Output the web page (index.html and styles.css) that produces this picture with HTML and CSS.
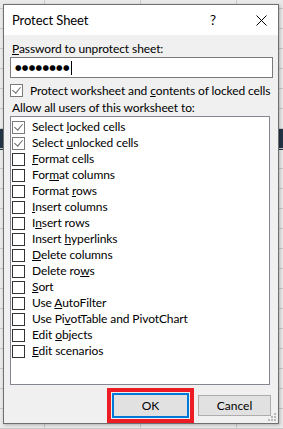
FILE: index.html
```html
<!DOCTYPE html>
<html>
<head>
<meta charset="utf-8">
<title>Protect Sheet</title>
<link rel="stylesheet" href="styles.css">
</head>
<body>
<div class="desk">
  <div class="band"></div>
  <div class="grid"></div>

  <div class="dialog">
    <div class="titlebar">
      <span class="title">Protect Sheet</span>
      <span class="help">?</span>
      <svg class="close" width="11" height="11" viewBox="0 0 11 11">
        <path d="M0.5 0.5 L10.5 10.5 M10.5 0.5 L0.5 10.5" stroke="#000" stroke-width="1" fill="none"/>
      </svg>
    </div>

    <div class="content">
      <div class="label"><u>P</u>assword to unprotect sheet:</div>
      <div class="pw"><span class="dots">&#9679;&#9679;&#9679;&#9679;&#9679;&#9679;&#9679;&#9679;</span><span class="caret"></span></div>

      <div class="check-row">
        <span class="box on"></span>
        <span>Protect worksheet and <u>c</u>ontents of locked cells</span>
      </div>

      <div class="label allow">Allow all users of this worksheet to:</div>
      <div class="list">
        <div class="item"><span class="box on"></span><span>Select <u>l</u>ocked cells</span></div>
        <div class="item"><span class="box on"></span><span>Select <u>u</u>nlocked cells</span></div>
        <div class="item"><span class="box"></span><span><u>F</u>ormat cells</span></div>
        <div class="item"><span class="box"></span><span>For<u>m</u>at columns</span></div>
        <div class="item"><span class="box"></span><span>Format <u>r</u>ows</span></div>
        <div class="item"><span class="box"></span><span><u>I</u>nsert columns</span></div>
        <div class="item"><span class="box"></span><span>I<u>n</u>sert rows</span></div>
        <div class="item"><span class="box"></span><span>Insert <u>h</u>yperlinks</span></div>
        <div class="item"><span class="box"></span><span><u>D</u>elete columns</span></div>
        <div class="item"><span class="box"></span><span>Delete ro<u>w</u>s</span></div>
        <div class="item"><span class="box"></span><span><u>S</u>ort</span></div>
        <div class="item"><span class="box"></span><span>Use <u>A</u>utoFilter</span></div>
        <div class="item"><span class="box"></span><span>Use Pi<u>v</u>otTable and PivotChart</span></div>
        <div class="item"><span class="box"></span><span>Edit <u>o</u>bjects</span></div>
        <div class="item"><span class="box"></span><span><u>E</u>dit scenarios</span></div>
      </div>

      <div class="buttons">
        <button class="btn ok">OK</button>
        <button class="btn">Cancel</button>
      </div>
    </div>

    <svg class="grip" width="9" height="9" viewBox="0 0 9 9">
      <rect x="6" y="0" width="2" height="2" fill="#b8b8b8"/>
      <rect x="3" y="3" width="2" height="2" fill="#b8b8b8"/>
      <rect x="6" y="3" width="2" height="2" fill="#b8b8b8"/>
      <rect x="0" y="6" width="2" height="2" fill="#b8b8b8"/>
      <rect x="3" y="6" width="2" height="2" fill="#b8b8b8"/>
      <rect x="6" y="6" width="2" height="2" fill="#b8b8b8"/>
    </svg>
  </div>
</div>
</body>
</html>
```

FILE: styles.css
```css
body { margin: 0; font-family: Lato, "Noto Sans", sans-serif; font-size: 12px; letter-spacing: -0.1px; line-height: 14px; color: #000; }

.desk { position: relative; width: 283px; height: 429px; overflow: hidden; background: #e9e9e9; }
.band { position: absolute; left: 0; top: 128px; width: 283px; height: 22px; background: #243447; }
.grid {
  position: absolute; left: 0; top: 0; width: 283px; height: 429px;
  background-image:
    linear-gradient(to right, #c8c8c8 1px, transparent 1px),
    linear-gradient(to bottom, #c8c8c8 1px, transparent 1px);
  background-size: 96px 20px;
  background-position: 44px 8px;
}

/* the dialog window */
.dialog {
  position: absolute; left: 3px; top: 4px;
  width: 274px; height: 418px;
  border: 1px solid #6f6f6f;
  background: #f0f0f0;
  box-shadow: 1px 1px 3px rgba(0,0,0,0.25);
}

.titlebar { height: 30px; background: #fff; display: flex; align-items: center; padding-left: 8px; }
.title { font-size: 13px; flex: 1; padding-bottom: 1px; }
.help { font-size: 13.5px; margin-right: 40px; padding-bottom: 1px; }
.close { margin-right: 11px; }

.content { padding: 7px 5px 0 6px; }
.label { height: 14px; padding-left: 2px; white-space: nowrap; }

.pw {
  margin-top: 1px; height: 21px; width: 263px; box-sizing: border-box;
  border: 1px solid #7a7a7a; background: #fff;
  display: flex; align-items: center; padding-left: 4px;
}
.dots { font-family: "DejaVu Sans", sans-serif; font-size: 7.5px; letter-spacing: 0.3px; }
.caret { width: 1px; height: 14px; background: #000; margin-left: 1px; }

.check-row { display: flex; align-items: center; margin-top: 6px; height: 13px; white-space: nowrap; }
.check-row .box { margin-right: 7px; }

.allow { margin-top: 4px; }

.box {
  display: inline-block; position: relative; flex: none;
  width: 11px; height: 11px; border: 1px solid #333; background: #fff;
}
.box.on { border-color: #7a7a7a; }
.box.on::after {
  content: ""; position: absolute; left: 3px; top: 0px;
  width: 4px; height: 7px;
  border-right: 1px solid #6a6a6a; border-bottom: 1px solid #6a6a6a;
  transform: rotate(40deg);
}

.list {
  margin-top: 1px; width: 260px; height: 269px; box-sizing: border-box;
  border: 1px solid #828790; background: #fff;
  padding: 2px 0 0 1px;
}
.item { display: flex; align-items: center; height: 16px; white-space: nowrap; }
.item .box { margin-right: 7px; }

.buttons { display: flex; justify-content: flex-end; align-items: center; gap: 9px; margin-top: 8px; padding-right: 2px; }
.btn {
  font-family: inherit; font-size: 12px; color: #000;
  width: 73px; height: 21px; padding: 0;
  background: #e1e1e1; border: 1px solid #adadad;
}
.btn.ok {
  width: 77px; height: 25px;
  border: 2px solid #0078d7;
  outline: 4px solid #ed1c24; outline-offset: 1px;
}

.grip { position: absolute; right: 1px; bottom: 1px; }
```
